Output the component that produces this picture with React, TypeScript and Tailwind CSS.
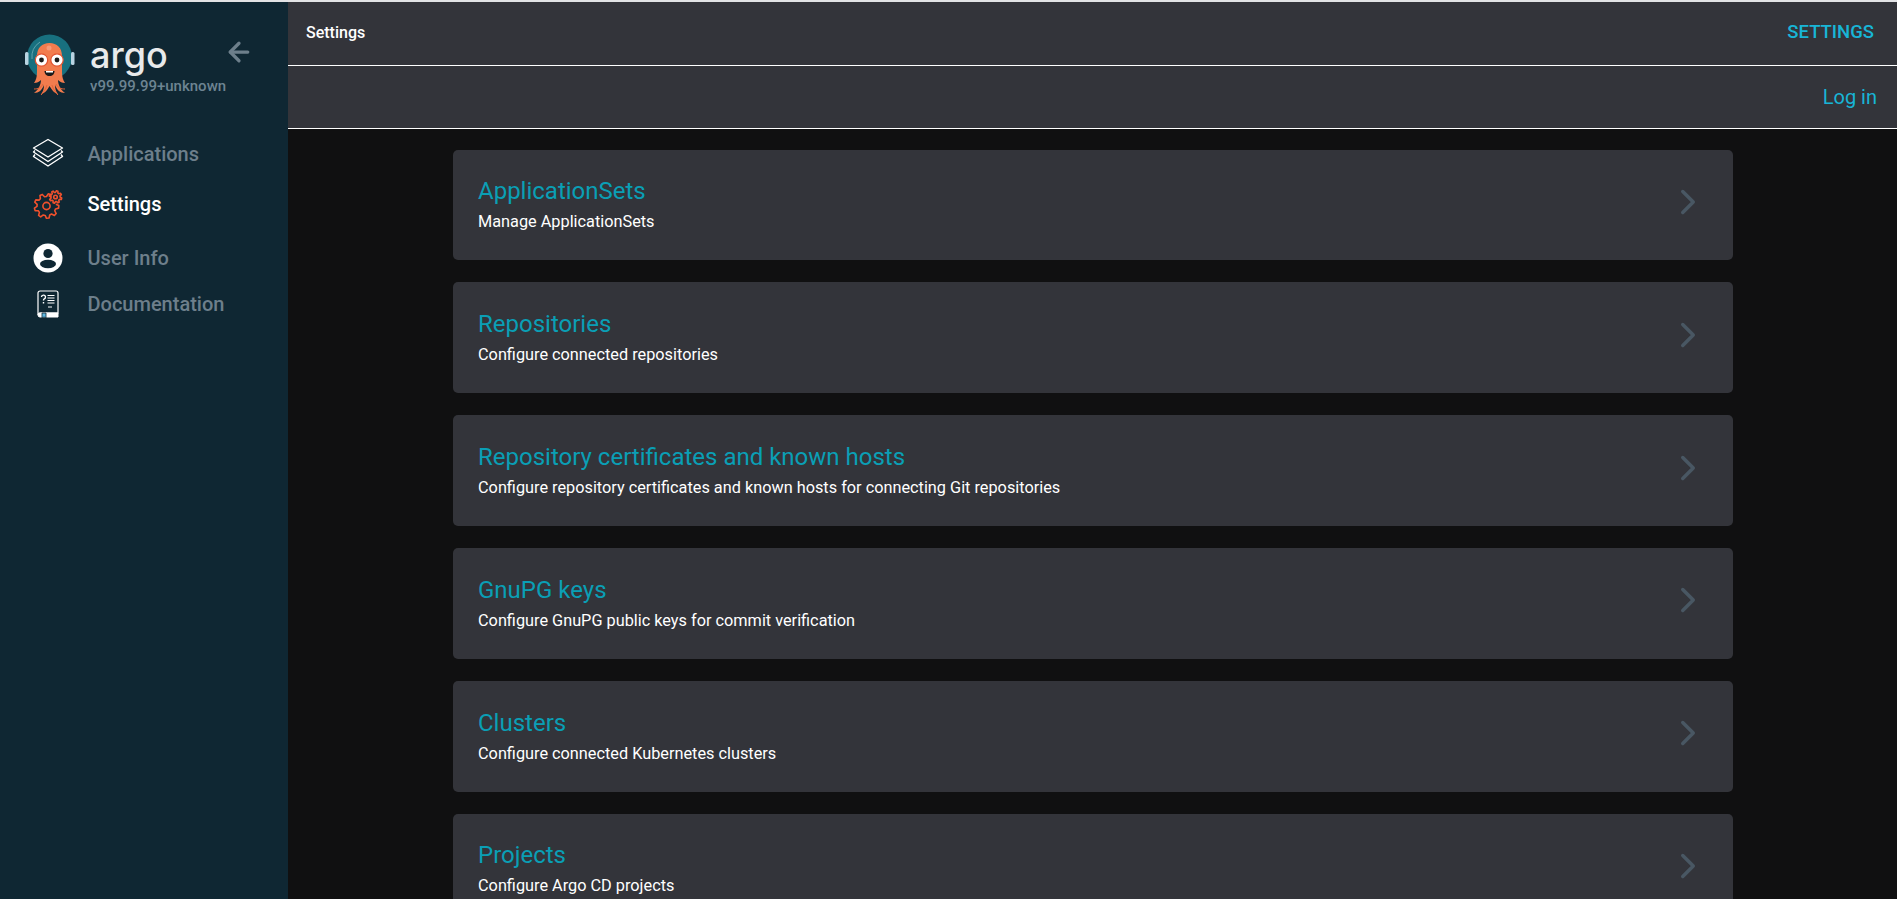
import { ArrowLeft, ChevronRight } from "lucide-react";

const CARDS = [
  { title: "ApplicationSets", sub: "Manage ApplicationSets" },
  { title: "Repositories", sub: "Configure connected repositories" },
  {
    title: "Repository certificates and known hosts",
    sub: "Configure repository certificates and known hosts for connecting Git repositories",
  },
  { title: "GnuPG keys", sub: "Configure GnuPG public keys for commit verification" },
  { title: "Clusters", sub: "Configure connected Kubernetes clusters" },
  { title: "Projects", sub: "Configure Argo CD projects" },
];

// outline of a cog with n teeth, angles in degrees
function gearPath(cx: number, cy: number, r: number, tooth: number, n: number, from = 0, to = 360) {
  const pts: string[] = [];
  const step = 360 / n;
  for (let a = from; a < to - 0.01; a += step) {
    const seq: [number, number][] = [
      [a, r],
      [a + step * 0.2, r + tooth],
      [a + step * 0.5, r + tooth],
      [a + step * 0.7, r],
    ];
    for (const [d, rad] of seq) {
      const t = (d * Math.PI) / 180;
      pts.push(`${(cx + rad * Math.cos(t)).toFixed(2)} ${(cy + rad * Math.sin(t)).toFixed(2)}`);
    }
  }
  return "M" + pts.join("L");
}

function ArgoLogo() {
  return (
    <svg width="52" height="66" viewBox="0 0 52 66" className="shrink-0">
      <circle cx="25.5" cy="25" r="22.5" fill="#18707f" />
      <rect x="1" y="20" width="3.5" height="13" rx="1.5" fill="#b9d4e2" />
      <rect x="47" y="20" width="3.5" height="13" rx="1.5" fill="#b9d4e2" />
      <path d="M8 27a18 18 0 0 1 8-17" fill="none" stroke="#5fa3ad" strokeWidth="1" />
      <path
        d="M13 24c0-8 5-13 12.5-13s12.5 5 12.5 13v16c0 5 1 8 3 11-3 0-5-1-7-3 0 5 3 10 7 13-5 0-8-3-10-8 0 4 1 7 3 9-4-1-6-4-8.5-8-2 4-4.5 7-8.5 8 2-2 3-5 3-9-2 5-5 8-10 8 4-3 7-8 7-13-2 2-4 3-7 3 2-3 3-6 3-11z"
        fill="#f27c4e"
      />
      <path d="M10 57c4 0 7-1 9-5M41 57c-4 0-7-1-9-5M17 63c2-2 5-6 6-10M34 63c-2-2-5-6-6-10" stroke="#e2643a" strokeWidth="1" fill="none" />
      <circle cx="25" cy="16" r="2.5" fill="#f79a77" />
      <circle cx="17.5" cy="28" r="6.2" fill="#fff" stroke="#e2522e" strokeWidth="1.2" />
      <circle cx="33" cy="28" r="6.2" fill="#fff" stroke="#e2522e" strokeWidth="1.2" />
      <circle cx="17.5" cy="28" r="2.4" fill="#1a1a1a" />
      <circle cx="33" cy="28" r="2.4" fill="#1a1a1a" />
      <path d="M20.5 39h10c0 3-2 5-5 5s-5-2-5-5z" fill="#1a1a1a" />
      <path d="M22 39h7v1.5h-7z" fill="#fff" />
    </svg>
  );
}

function LayersIcon() {
  return (
    <svg width="32" height="32" viewBox="0 0 32 32" fill="none" stroke="#fff" strokeWidth="1.4" strokeLinejoin="round">
      <path d="M16 1.5 30.5 10 16 19 1.5 10z" />
      <path d="M3 12.5 1.5 14 16 23.5 30.5 14 29 12.5" />
      <path d="M3 16.5 1.5 18.5 16 28 30.5 18.5 29 16.5" />
    </svg>
  );
}

function GearsIcon() {
  return (
    <svg width="32" height="32" viewBox="0 0 32 32" fill="none" stroke="#f0512d" strokeWidth="1.6" strokeLinejoin="round">
      <path d={gearPath(14.5, 18, 9.5, 2.8, 9, -10, 300)} />
      <circle cx="14.5" cy="18" r="3.6" />
      <path d={gearPath(23.5, 9, 4.6, 1.7, 8) + "z"} />
      <circle cx="23.5" cy="9" r="1.8" />
    </svg>
  );
}

function UserIcon() {
  return (
    <svg width="30" height="30" viewBox="0 0 30 30">
      <circle cx="15" cy="15" r="14.5" fill="#fff" />
      <circle cx="15" cy="10.5" r="4.6" fill="#0f2733" />
      <ellipse cx="15" cy="21" rx="8" ry="4.2" fill="#0f2733" />
    </svg>
  );
}

function DocIcon() {
  return (
    <svg width="22" height="28" viewBox="0 0 22 28" fill="none" stroke="#fff">
      <path d="M3 1h16a2 2 0 0 1 2 2v20H3a2 2 0 0 0-2 2V3a2 2 0 0 1 2-2z" strokeWidth="1.2" />
      <path d="M1 25a2 2 0 0 1 2-2h18v4H3a2 2 0 0 1-2-2z" fill="#fff" strokeWidth="1" />
      <path d="M5 23h4v5l-2-1-2 1z" fill="#5fb7e0" stroke="#0f2733" strokeWidth="0.8" />
      <path d="M4.5 7a2 2 0 1 1 2.6 2c-.5.3-.6.7-.6 1.5M6.5 12v1.4" strokeWidth="1.4" />
      <path d="M10.5 5.5h7M10.5 8h7M10.5 10.5h7M10.5 13h7M11 17h4" strokeWidth="1.2" />
    </svg>
  );
}

function NavItem({ icon, label, active, className }: { icon: React.ReactNode; label: string; active?: boolean; className: string }) {
  return (
    <div className={`flex items-center ${className}`}>
      <div className="flex w-[87.5px] shrink-0 justify-center pl-2">{icon}</div>
      <span className={`text-[20px] font-medium ${active ? "text-white" : "text-[#6d7f8b]"}`}>{label}</span>
    </div>
  );
}

export default function App() {
  return (
    <div className="flex h-screen overflow-hidden border-t-2 border-[#e2e3e5] bg-[#101011] font-['Roboto',sans-serif]">
      <aside className="flex w-[288px] shrink-0 flex-col bg-[#0f2733]">
        <div className="flex h-[127px] items-start pl-6 pt-[30px]">
          <ArgoLogo />
          <div className="ml-3.5 flex flex-col">
            <span className="font-['Inter',sans-serif] text-[36px] leading-[46px] font-medium text-[#e8eaeb]">argo</span>
            <span className="text-[15px] leading-4 font-medium text-[#6d8492]">v99.99.99+unknown</span>
          </div>
          <ArrowLeft size={30} strokeWidth={2.6} className="mt-[5px] ml-[-2px] text-[#6d7f8b]" />
        </div>
        <NavItem icon={<LayersIcon />} label="Applications" className="h-[50px]" />
        <NavItem icon={<GearsIcon />} label="Settings" active className="h-[50px]" />
        <NavItem icon={<UserIcon />} label="User Info" className="mt-1 h-[50px]" />
        <NavItem icon={<DocIcon />} label="Documentation" className="mt-[-4px] h-[50px]" />
      </aside>

      <main className="flex min-w-0 flex-1 flex-col">
        <div className="flex h-[64px] shrink-0 items-center justify-between border-b border-white bg-[#33343a] pr-[23px] pb-0.5 pl-[18px]">
          <span className="text-[16px] font-medium text-white">Settings</span>
          <span className="text-[18.5px] font-medium text-[#18b5d6]">SETTINGS</span>
        </div>
        <div className="flex h-[63px] shrink-0 items-center justify-end border-b border-white bg-[#33343a] pr-5">
          <span className="text-[20px] text-[#18b5d6]">Log in</span>
        </div>
        <div className="flex flex-col items-center gap-[22px] pt-[20.6px]">
          {CARDS.map((c) => (
            <div
              key={c.title}
              className="flex h-[110.8px] w-[1280px] shrink-0 items-center justify-between rounded-[5px] bg-[#33343a] pr-6 pb-0.5 pl-[25.5px]"
            >
              <div>
                <div className="text-[24px] leading-8 text-[#0a9fb5]">{c.title}</div>
                <div className="mt-[5px] text-[16.3px] leading-5 text-white">{c.sub}</div>
              </div>
              <ChevronRight size={42} strokeWidth={2} className="mb-1 text-[#495763]" />
            </div>
          ))}
        </div>
      </main>
    </div>
  );
}
